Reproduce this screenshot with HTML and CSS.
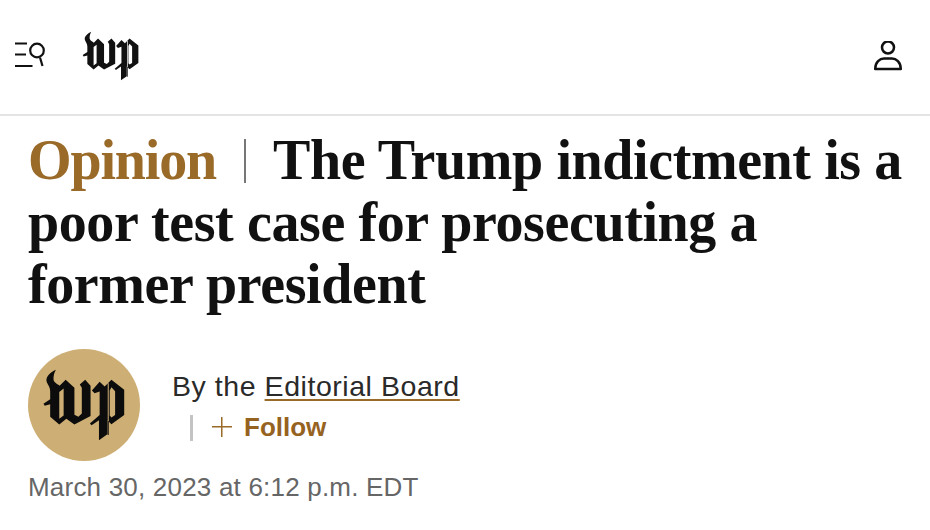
FILE: index.html
```html
<!DOCTYPE html>
<html lang="en">
<head>
<meta charset="utf-8">
<title>Opinion | The Trump indictment is a poor test case</title>
<link rel="stylesheet" href="styles.css">
</head>
<body>
<svg class="defs" width="0" height="0" aria-hidden="true">
  <defs>
    <symbol id="wp" viewBox="35 28 250 214">
      <path d="M75 30C58 38 45 50 47 64C49 74 58 80 58 94V118L38 131L42 137L58 133V170L85 193L106 176L130 193L178 168V78L162 60L146 74L152 84V160L142 170L130 164V84L104 60L86 78C80 72 70 70 68 60C67 50 70 38 75 30ZM85 96L98 86V166L85 176Z" fill-rule="evenodd"/>
      <path d="M182 92L205 66L220 80L240 60L278 90V165L240 192L228 180V222L203 240V180L181 195L176 190L205 165V95L190 100ZM229 70H232V224H229ZM235 92L240 82L251 94V165L240 172L235 166Z" fill-rule="evenodd"/>
    </symbol>
  </defs>
</svg>
<header class="topbar">
  <div class="topbar-left">
    <svg class="icon-search" viewBox="0 0 32 28" aria-hidden="true">
      <path d="M1 1.500H13M1 12.500H12M1 24H18.500" fill="none" stroke="#111" stroke-width="2.200"/>
      <circle cx="23" cy="8.500" r="6.800" fill="none" stroke="#111" stroke-width="2.200"/>
      <path d="M26 15.500L28.500 24" fill="none" stroke="#111" stroke-width="2.200"/>
    </svg>
    <svg class="logo-small" aria-label="The Washington Post"><use href="#wp"/></svg>
  </div>
  <svg class="icon-user" viewBox="0 0 30 30" aria-hidden="true">
    <circle cx="15" cy="6.500" r="6" fill="none" stroke="#111" stroke-width="2.500"/>
    <path d="M2.200 28C2.200 21 7 17.500 11 17.500H19C23 17.500 27.800 21 27.800 28Z" fill="none" stroke="#111" stroke-width="2.500" stroke-linejoin="round"/>
  </svg>
</header>
<main class="article">
  <h1 class="headline"><span class="kicker">Opinion</span><span class="divider"></span>The Trump indictment is a poor test case for prosecuting a former president</h1>
  <div class="byline">
    <div class="avatar"><svg class="logo-large" aria-hidden="true"><use href="#wp"/></svg></div>
    <div class="author">
      <p class="by">By the <a class="name" href="#">Editorial Board</a></p>
      <p class="follow"><span class="follow-sep"></span><span class="plus"></span><span class="follow-text">Follow</span></p>
    </div>
  </div>
  <p class="date">March 30, 2023 at 6:12 p.m. EDT</p>
</main>
</body>
</html>
```
FILE: styles.css
```css
* { box-sizing: border-box; }
html, body { margin: 0; padding: 0; background: #fff; }
body { width: 930px; height: 530px; overflow: hidden; font-family: "Liberation Sans", sans-serif; color: #111; }
.defs { display: block; height: 0; }
.topbar { height: 116px; border-bottom: 2px solid #e4e4e4; display: flex; align-items: center; justify-content: space-between; padding: 0 27px 2px 14px; }
.topbar-left { display: flex; align-items: center; gap: 36px; }
.icon-search { width: 32px; height: 28px; display: block; }
.logo-small { width: 58px; height: 50px; display: block; fill: #111; }
.icon-user { width: 30px; height: 30px; display: block; }
.article { padding: 13px 16px 0 28px; }
.headline { margin: 0; font-family: "Liberation Serif", serif; font-weight: 700; font-size: 56px; line-height: 62px; color: #111; letter-spacing: -0.4px; }
.kicker { color: #9a6a28; letter-spacing: -1.15px; }
.divider { display: inline-block; width: 2px; height: 44px; background: #777; margin: 0 27px 0 28px; vertical-align: -4px; }
.byline { display: flex; align-items: flex-start; gap: 32px; margin-top: 34px; }
.avatar { width: 112px; height: 112px; border-radius: 50%; background: #cdae74; display: flex; align-items: center; justify-content: center; }
.logo-large { width: 85px; height: 72px; display: block; fill: #0c0c0c; }
.author { padding-top: 20px; }
.by { margin: 0; font-size: 28.500px; line-height: 34px; letter-spacing: 0.55px; color: #2a2a2a; }
.name { color: #2a2a2a; text-decoration: underline; text-decoration-color: #9a6a28; text-underline-offset: 3px; }
.follow { margin: 9px 0 0; display: flex; align-items: center; padding-left: 18px; height: 30px; }
.follow-sep { width: 3px; height: 26px; background: #c4c4c4; margin-right: 19px; transform: translateY(1px); }
.plus { width: 20px; height: 20px; margin-right: 12px; background: linear-gradient(#9a6a28,#9a6a28) center/100% 1.5px no-repeat, linear-gradient(#9a6a28,#9a6a28) center/1.5px 100% no-repeat; }
.follow-text { font-weight: 700; font-size: 26px; color: #96621f; }
.date { margin: 11px 0 0; font-size: 26px; letter-spacing: 0.2px; color: #666; }
```
